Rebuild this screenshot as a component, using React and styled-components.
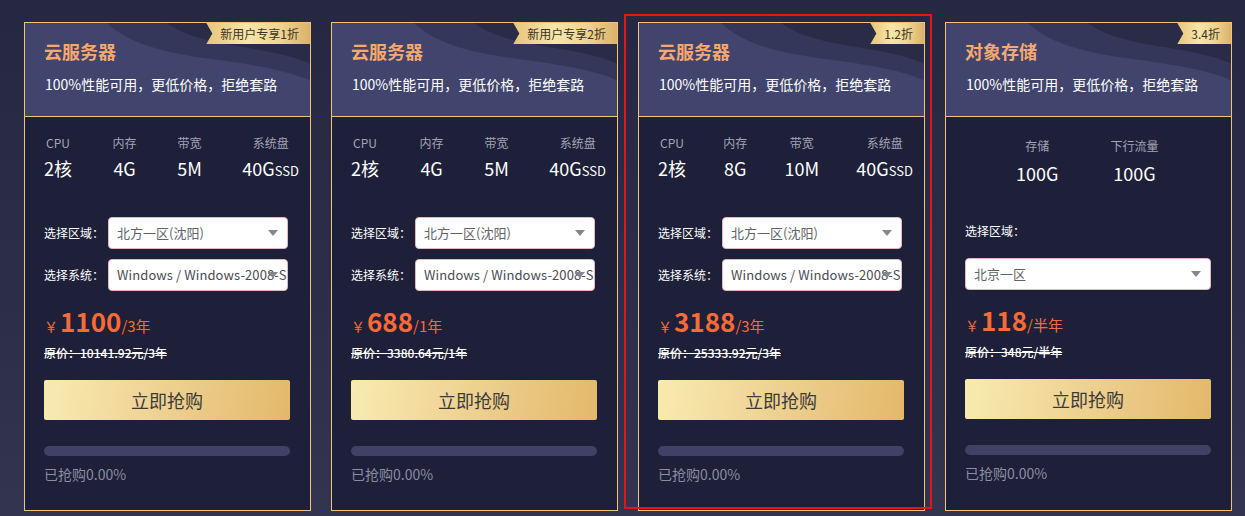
import React from 'react';
import styled, { createGlobalStyle } from 'styled-components';

const GOLD = '#f3c27c';
const ORANGE = '#fa6a37';

const GlobalStyle = createGlobalStyle`
  html, body {
    margin: 0;
    padding: 0;
  }
  body {
    font-family: "Noto Sans CJK SC", "Noto Sans", sans-serif;
    background: #262742;
  }
`;

// PAGE
const Page = styled.main`
  height: 516px;
  box-sizing: border-box;
  padding: 22px 0 5px 24px;
  background: linear-gradient(180deg, #262741 0%, #2c2d48 55%, #33344f 100%);
  display: flex;
  gap: 20px;
  align-items: stretch;
`;

// CARD
const Card = styled.section`
  position: relative;
  width: 287px;
  box-sizing: border-box;
  border: 1px solid ${GOLD};
  background: #1e1f38;
  display: flex;
  flex-direction: column;

  &::after {
    content: '';
    display: ${({ $active }) => ($active ? 'block' : 'none')};
    position: absolute;
    left: -15px;
    top: -9px;
    right: -8px;
    bottom: 1px;
    border: 2px solid #e5141c;
    pointer-events: none;
  }
`;

// HEADER
const Header = styled.header`
  position: relative;
  overflow: hidden;
  height: 94px;
  padding: 15px 20px 0 19px;
  box-sizing: border-box;
  background: #3f4268;
  border-bottom: 1px solid ${GOLD};
`;

const Waves = styled.svg`
  position: absolute;
  inset: 0;
  width: 100%;
  height: 100%;
`;

const Badge = styled.div`
  position: absolute;
  top: 0;
  right: 0;
  height: 21px;
  padding: 0 11px 0 14px;
  font-size: 12px;
  line-height: 21px;
  color: #3a3326;
  background: linear-gradient(90deg, #e8c47c 0%, #f6e6a8 40%, #efd592 70%, #dcb26a 100%);
  clip-path: polygon(0 0, 100% 0, 100% 100%, 0 100%, 6px 50%);
`;

const Title = styled.h2`
  position: relative;
  margin: 0;
  font-size: 18px;
  line-height: 26px;
  font-weight: 700;
  color: #f8a86f;
`;

const Subtitle = styled.p`
  position: relative;
  margin: 10px 0 0 1px;
  font-size: 14px;
  line-height: 20px;
  color: #ffffff;
`;

// BODY
const Body = styled.div`
  flex: 1;
  padding: 0 20px 0 19px;
  display: flex;
  flex-direction: column;
`;

const Specs = styled.div`
  display: flex;
  justify-content: ${({ $wide }) => ($wide ? 'flex-start' : 'space-between')};
  gap: ${({ $wide }) => ($wide ? '52px' : '0')};
  margin: ${({ $wide }) => ($wide ? '20px 0 0 51px' : '17px -9px 0 0')};
`;

const Spec = styled.div`
  display: flex;
  flex-direction: column;
  align-items: center;
`;

const SpecLabel = styled.span`
  font-size: 12px;
  line-height: 18px;
  color: #a2a4b8;
`;

const SpecValue = styled.span`
  margin-top: ${({ $wide }) => ($wide ? '6px' : '4px')};
  height: 24px;
  font-size: 18px;
  line-height: 24px;
  color: #ffffff;
  white-space: nowrap;

  small {
    font-size: 13px;
    line-height: 0;
  }
`;

const Selects = styled.div`
  margin-top: 37px;
  display: flex;
  flex-direction: column;
  gap: 10px;
`;

const SelectRow = styled.div`
  display: flex;
  align-items: center;
  justify-content: space-between;
  padding-right: 2px;
`;

const FieldLabel = styled.span`
  font-size: 12px;
  line-height: 18px;
  color: #ffffff;
  margin-top: ${({ $gap }) => $gap || 0};
`;

const SelectBox = styled.div`
  position: relative;
  width: ${({ $full }) => ($full ? '100%' : '180px')};
  height: 32px;
  flex-shrink: 0;
  margin-top: ${({ $gap }) => $gap || 0};
  box-sizing: border-box;
  padding: 0 2px 0 8px;
  background: #ffffff;
  border: 1px solid #e2b8bc;
  border-radius: 4px;
  font-size: 13px;
  line-height: 30px;
  letter-spacing: ${({ $dark }) => ($dark ? '0.1px' : '0')};
  color: ${({ $dark }) => ($dark ? '#4a4c55' : '#606266')};
  white-space: nowrap;
  overflow: hidden;
`;

const Caret = styled.i`
  position: absolute;
  right: 9px;
  top: 12px;
  width: 0;
  height: 0;
  border-left: 5px solid transparent;
  border-right: 5px solid transparent;
  border-top: 6px solid #85878f;
`;

const Price = styled.div`
  margin-top: ${({ $gap }) => $gap || '14px'};
  height: 32px;
  display: flex;
  align-items: baseline;
  color: ${ORANGE};
  line-height: 32px;
`;

const Yen = styled.span`
  font-size: 14px;
  margin-right: 2px;
`;

const Amount = styled.span`
  font-size: 26px;
  font-weight: 700;
`;

const Unit = styled.span`
  font-size: 15px;
`;

const Original = styled.div`
  margin-top: 8px;
  font-size: 12px;
  line-height: 16px;
  font-weight: 500;
  color: #ffffff;
  text-decoration: line-through;
`;

const BuyButton = styled.button`
  margin-top: 19px;
  height: 40px;
  width: 100%;
  flex-shrink: 0;
  border: none;
  border-radius: 2px;
  background: linear-gradient(100deg, #f8ebb0 0%, #efd394 45%, #e3b86b 100%);
  font-family: inherit;
  font-size: 18px;
  color: #3a3a3a;
  cursor: pointer;
`;

const Progress = styled.div`
  margin-top: 26px;
  height: 10px;
  flex-shrink: 0;
  border-radius: 5px;
  background: #3f4266;
  overflow: hidden;
`;

const ProgressFill = styled.div`
  height: 100%;
  background: ${ORANGE};
`;

const Status = styled.div`
  margin-top: 8px;
  font-size: 14px;
  line-height: 20px;
  color: #8b8da3;
`;

const servers = [
  { badge: '新用户专享1折', cpu: '2核', mem: '4G', bw: '5M', price: '1100', unit: '/3年', orig: '10141.92元/3年' },
  { badge: '新用户专享2折', cpu: '2核', mem: '4G', bw: '5M', price: '688', unit: '/1年', orig: '3380.64元/1年' },
  { badge: '1.2折', cpu: '2核', mem: '8G', bw: '10M', price: '3188', unit: '/3年', orig: '25333.92元/3年', active: true },
];

function HeaderBlock({ title, badge }) {
  return (
    <Header>
      <Waves viewBox="0 0 285 94" preserveAspectRatio="none">
        <path d="M0,0 L285,0 L285,94 L0,94 Z" fill="#41446c" />
        <path d="M82,0 C105,22 140,30 190,37 C235,43 265,49 285,58 L285,0 Z" fill="#35375a" />
        <path d="M142,0 C160,14 190,20 228,26 C252,30 272,35 285,41 L285,0 Z" fill="#2a2b47" />
      </Waves>
      <Badge>{badge}</Badge>
      <Title>{title}</Title>
      <Subtitle>100%性能可用，更低价格，拒绝套路</Subtitle>
    </Header>
  );
}

function Footer({ price, unit, orig, gap }) {
  return (
    <>
      <Price $gap={gap}>
        <Yen>￥</Yen>
        <Amount>{price}</Amount>
        <Unit>{unit}</Unit>
      </Price>
      <Original>原价：{orig}</Original>
      <BuyButton>立即抢购</BuyButton>
      <Progress>
        <ProgressFill style={{ width: '0%' }} />
      </Progress>
      <Status>已抢购0.00%</Status>
    </>
  );
}

function ServerCard({ item }) {
  return (
    <Card $active={item.active}>
      <HeaderBlock title="云服务器" badge={item.badge} />
      <Body>
        <Specs>
          <Spec>
            <SpecLabel>CPU</SpecLabel>
            <SpecValue>{item.cpu}</SpecValue>
          </Spec>
          <Spec>
            <SpecLabel>内存</SpecLabel>
            <SpecValue>{item.mem}</SpecValue>
          </Spec>
          <Spec>
            <SpecLabel>带宽</SpecLabel>
            <SpecValue>{item.bw}</SpecValue>
          </Spec>
          <Spec>
            <SpecLabel>系统盘</SpecLabel>
            <SpecValue>
              40G<small>SSD</small>
            </SpecValue>
          </Spec>
        </Specs>
        <Selects>
          <SelectRow>
            <FieldLabel>选择区域：</FieldLabel>
            <SelectBox>
              北方一区(沈阳)
              <Caret />
            </SelectBox>
          </SelectRow>
          <SelectRow>
            <FieldLabel>选择系统：</FieldLabel>
            <SelectBox $dark>
              Windows / Windows-2008-SP2
              <Caret />
            </SelectBox>
          </SelectRow>
        </Selects>
        <Footer price={item.price} unit={item.unit} orig={item.orig} />
      </Body>
    </Card>
  );
}

function StorageCard() {
  return (
    <Card>
      <HeaderBlock title="对象存储" badge="3.4折" />
      <Body>
        <Specs $wide>
          <Spec>
            <SpecLabel>存储</SpecLabel>
            <SpecValue $wide>100G</SpecValue>
          </Spec>
          <Spec>
            <SpecLabel>下行流量</SpecLabel>
            <SpecValue $wide>100G</SpecValue>
          </Spec>
        </Specs>
        <FieldLabel $gap="37px">选择区域：</FieldLabel>
        <SelectBox $full $gap="18px">
          北京一区
          <Caret />
        </SelectBox>
        <Footer price="118" unit="/半年" orig="348元/半年" gap="14px" />
      </Body>
    </Card>
  );
}

export default function App() {
  return (
    <>
      <GlobalStyle />
      <Page>
        {servers.map((item) => (
          <ServerCard key={item.badge} item={item} />
        ))}
        <StorageCard />
      </Page>
    </>
  );
}
